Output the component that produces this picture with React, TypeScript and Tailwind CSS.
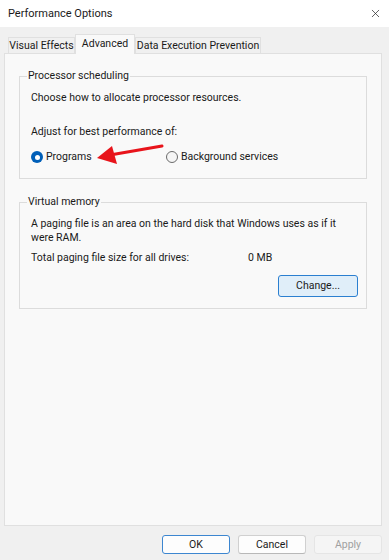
import { X } from "lucide-react";

function Radio({ checked, label }: { checked?: boolean; label: string }) {
  return (
    <label className="flex items-center gap-[3px]">
      {checked ? (
        <span className="flex h-[12px] w-[12px] items-center justify-center rounded-full bg-[#005fb8]">
          <span className="h-[5px] w-[5px] rounded-full bg-white" />
        </span>
      ) : (
        <span className="h-[12px] w-[12px] rounded-full border border-[#6b6b6b] bg-[#f5f5f5]" />
      )}
      <span>{label}</span>
    </label>
  );
}

function DialogButton({
  children,
  primary,
  disabled,
}: {
  children: string;
  primary?: boolean;
  disabled?: boolean;
}) {
  return (
    <button
      className={
        primary
          ? "h-[19px] w-[68px] rounded-[3px] border border-[#3c86d0] bg-[#fdfdfd] text-[#1a1a1a]"
          : disabled
            ? "h-[19px] w-[68px] rounded-[3px] border border-[#e5e5e5] bg-[#f5f5f5] text-[#a0a0a0]"
            : "h-[19px] w-[68px] rounded-[3px] border border-[#d0d0d0] border-b-[#b8b8b8] bg-[#fdfdfd] text-[#1a1a1a]"
      }
    >
      {children}
    </button>
  );
}

export default function App() {
  return (
    <div className="relative flex h-[560px] w-[389px] flex-col bg-[#f0f0f0] font-['Segoe_UI',Roboto,sans-serif] text-[10.5px] leading-[14px] text-[#1a1a1a]">
      {/* title bar */}
      <div className="flex h-[27px] items-center justify-between bg-white pl-[8px] pr-[7px]">
        <span className="pt-[1px] text-[11px]">Performance Options</span>
        <X className="h-[13px] w-[13px] text-[#222]" strokeWidth={1.3} />
      </div>

      <div className="pl-[4px] pr-[7px]">
        {/* tabs */}
        <div className="mt-[7px] flex items-end pl-[4px]">
          <div className="flex h-[16px] w-[67px] items-center justify-center border border-b-0 border-[#e0e0e0] bg-[#f0f0f0]">
            Visual Effects
          </div>
          <div className="relative z-10 -mb-px flex h-[20px] w-[60px] items-start justify-center border border-b-0 border-[#e0e0e0] bg-[#f9f9f9] pt-[2px]">
            Advanced
          </div>
          <div className="flex h-[16px] w-[126px] items-center justify-center border border-b-0 border-[#e0e0e0] bg-[#f0f0f0]">
            Data Execution Prevention
          </div>
        </div>

        {/* panel */}
        <div className="flex h-[473px] flex-col border border-[#e0e0e0] bg-[#f9f9f9] px-[14px] pt-[15px]">
          <fieldset className="border border-[#dcdcdc] px-[7px] pb-[14px]">
            <legend className="px-[1px]">Processor scheduling</legend>
            <div className="pl-[4px]">
              <p className="mt-[8px]">Choose how to allocate processor resources.</p>
              <p className="mt-[20px]">Adjust for best performance of:</p>
              <div className="mt-[11px] flex">
                <div className="w-[135px]">
                  <Radio checked label="Programs" />
                </div>
                <Radio label="Background services" />
              </div>
            </div>
          </fieldset>

          <fieldset className="mt-[16px] border border-[#dcdcdc] px-[7px] pb-[11px]">
            <legend className="px-[1px]">Virtual memory</legend>
            <div className="pl-[4px]">
              <p className="mt-[8px]">
                A paging file is an area on the hard disk that Windows uses as if it
                <br />
                were RAM.
              </p>
              <div className="mt-[6px] flex">
                <span className="w-[217px]">Total paging file size for all drives:</span>
                <span>0 MB</span>
              </div>
              <div className="mt-[10px] flex justify-end pr-[1px]">
                <button className="h-[22px] w-[80px] rounded-[3px] border border-[#2b7fd0] bg-[#e0eef9]">
                  Change...
                </button>
              </div>
            </div>
          </fieldset>
        </div>

        {/* dialog buttons */}
        <div className="mt-[9px] flex justify-end gap-[8px]">
          <DialogButton primary>OK</DialogButton>
          <DialogButton>Cancel</DialogButton>
          <DialogButton disabled>Apply</DialogButton>
        </div>
      </div>

      {/* red annotation arrow */}
      <svg
        className="pointer-events-none absolute left-[90px] top-[139px]"
        width="80"
        height="30"
        viewBox="0 0 80 30"
      >
        <line x1="72" y1="7" x2="20" y2="16" stroke="#e8141b" strokeWidth="3" strokeLinecap="round" />
        <polygon points="7,19 22,7 27,25" fill="#e8141b" />
      </svg>
    </div>
  );
}
